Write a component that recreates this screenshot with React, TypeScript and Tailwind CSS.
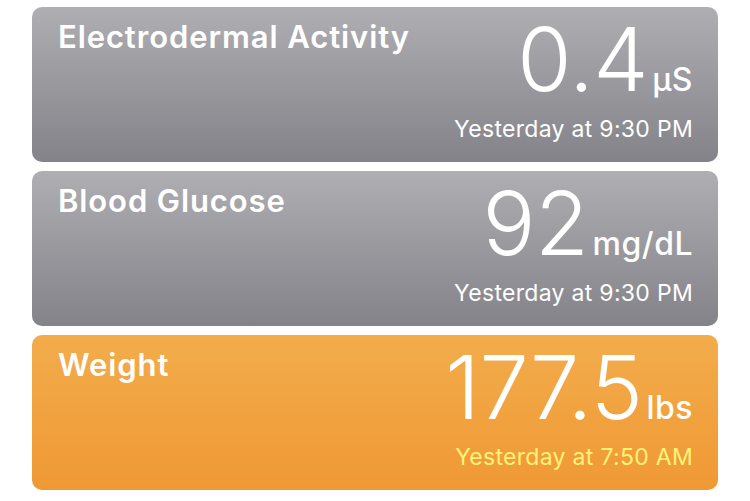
const cards = [
  {
    title: "Electrodermal Activity",
    value: "0.4",
    unit: "µS",
    time: "Yesterday at 9:30 PM",
    tone: "gray",
  },
  {
    title: "Blood Glucose",
    value: "92",
    unit: "mg/dL",
    time: "Yesterday at 9:30 PM",
    tone: "gray",
  },
  {
    title: "Weight",
    value: "177.5",
    unit: "lbs",
    time: "Yesterday at 7:50 AM",
    tone: "orange",
  },
];

export default function App() {
  return (
    <div
      className="w-[750px] h-[501px] bg-white flex flex-col gap-[9px] pt-[7px] pl-[32px] pr-[32px]"
      style={{ fontFamily: "Inter, 'Noto Sans', sans-serif" }}
    >
      {cards.map((c) => (
        <div
          key={c.title}
          className={
            c.tone === "orange"
              ? "h-[155px] rounded-[10px] bg-gradient-to-b from-[#f3ac4b] to-[#ef9934] flex justify-between pl-[26px] pr-[25px]"
              : "h-[155px] rounded-[10px] bg-gradient-to-b from-[#afaeb3] to-[#848389] flex justify-between pl-[26px] pr-[25px]"
          }
        >
          <div className="pt-[10px] text-white text-[31px] font-semibold leading-[40px] tracking-[0.9px]">
            {c.title}
          </div>
          <div className="flex flex-col items-end pt-[6px]">
            <div className="flex items-baseline text-white">
              <span className="text-[88px] font-light leading-[92px] tracking-[-0.5px]">
                {c.value}
              </span>
              <span className="text-[32px] font-medium ml-[4px] tracking-[0.5px]">{c.unit}</span>
            </div>
            <div
              className={
                c.tone === "orange"
                  ? "text-[23px] leading-[30px] mt-[9px] tracking-[0.3px] text-[#fff27a]"
                  : "text-[23px] leading-[30px] mt-[9px] tracking-[0.3px] text-white"
              }
            >
              {c.time}
            </div>
          </div>
        </div>
      ))}
    </div>
  );
}
